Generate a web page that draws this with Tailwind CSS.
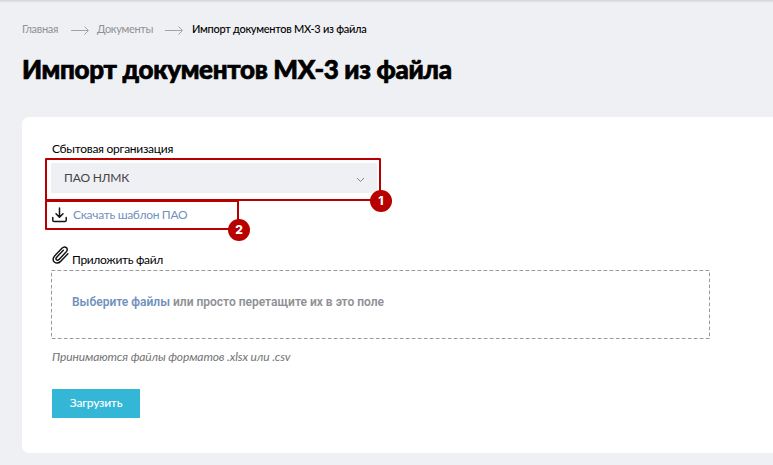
<!DOCTYPE html>
<html lang="ru">
<head>
<meta charset="utf-8">
<title>Импорт документов МХ-3 из файла</title>
<script src="https://cdn.jsdelivr.net/npm/@tailwindcss/browser@4"></script>
</head>
<body class="h-[465px] w-[773px] overflow-hidden bg-[#eff0f4] font-['Lato','Liberation_Sans',sans-serif] text-black">
<div class="h-[3px] bg-linear-to-b from-[#d3d4d8] to-[#eff0f4]"></div>
<nav class="mt-[18px] ml-[22px] flex h-4 items-center text-[11px] leading-4 whitespace-nowrap">
  <a class="w-[49px] text-[#909195]"><span class="tracking-[-0.3px]">Главная</span></a>
  <svg class="mt-[3px] w-[26px] shrink-0" width="26" height="10" viewBox="0 0 26 10" fill="none" stroke="#a3a4a8"><path d="M0 4.5h17M13.5.5l4 4-4 4"/></svg>
  <a class="w-[68px] text-[#909195]"><span class="tracking-[-0.35px]">Документы</span></a>
  <svg class="mt-[3px] w-[27px] shrink-0" width="27" height="10" viewBox="0 0 27 10" fill="none" stroke="#a3a4a8"><path d="M0 4.5h17M13.5.5l4 4-4 4"/></svg>
  <span class="font-medium tracking-[-0.29px]">Импорт документов МХ-3 из файла</span>
</nav>
<h1 class="mt-[15px] ml-[22px] h-[34px] text-[26px] leading-[34px] font-black tracking-[-0.34px] whitespace-nowrap [-webkit-text-stroke:0.7px_#000]">Импорт документов МХ-3 из файла</h1>
<main class="mt-[31px] ml-[22px] h-[336px] rounded-l-[7px] bg-white pt-[23px] pl-[29px]">
  <label class="ml-px block h-[17px] text-[12px] leading-[17px] tracking-[-0.27px]">Сбытовая организация</label>
  <div class="relative mt-[6px] h-[30px] w-[326px]">
    <div class="flex h-full items-center justify-between bg-[#eff0f4] pr-[12px] pl-[13px] text-[12px] tracking-[-0.15px] text-[#444]">
      <span>ПАО НЛМК</span>
      <svg class="mt-[3px]" width="9" height="6" viewBox="0 0 9 6" fill="none" stroke="#858689"><path d="M1 1l3.5 3.5L8 1"/></svg>
    </div>
    <div class="absolute -top-[5px] -left-[6px] h-[43px] w-[336px] rounded-[1px] border-2 border-[#b80000]"></div>
    <div class="absolute top-[27px] left-[319px] z-10 flex size-[22px] items-center justify-center rounded-full bg-[#b80000] font-['Inter'] text-[12px] font-extrabold text-white">1</div>
  </div>
  <div class="relative mt-[12px] flex h-[20px] w-[188px] items-center text-[12px] text-[#7191bd]">
    <svg class="mr-[6px] ml-px shrink-0" width="15" height="16" viewBox="0 0 15 16" fill="none" stroke="#151515" stroke-width="1.5" stroke-linecap="round" stroke-linejoin="round"><path d="M7.5 1v9M4 6.7l3.5 3.5L11 6.7M.8 10.5v2.7q0 1.3 1.3 1.3h10.8q1.3 0 1.3-1.3v-2.7"/></svg>
    <span class="tracking-[-0.3px]">Скачать шаблон ПАО</span>
    <div class="absolute -top-[5px] -left-[6px] h-[30px] w-[194px] rounded-[1px] border-2 border-[#b80000]"></div>
    <div class="absolute top-[14px] left-[177px] flex size-[22px] items-center justify-center rounded-full bg-[#b80000] font-['Inter'] text-[12px] font-extrabold text-white">2</div>
  </div>
  <div class="mt-[21px] flex h-[24px] items-start text-[12px] leading-[17px]">
    <svg class="mr-[3px] ml-px shrink-0" width="17" height="18" viewBox="0 0 17 18" fill="none" stroke="#111" stroke-width="1.45" stroke-linecap="round" stroke-linejoin="round"><path d="M15.9 7.8l-6.9 7.3c-5 4.6-10.6-.4-6.4-5.2l7.3-7.7c3.2-3.1 7.2.4 4.4 3.6l-7.2 7.6c-2.2 1.9-4.2-.2-2.4-2.2l6.6-7"/></svg>
    <span class="mt-[5px] tracking-[-0.33px]">Приложить файл</span>
  </div>
  <div class="grid h-[70px] w-[660px]">
    <svg class="col-start-1 row-start-1" width="660" height="70" fill="none" stroke="#98999c"><path d="M.5 .5H658.5V68.5H.5Z" stroke-dasharray="3.7 2.3"/></svg>
    <p class="col-start-1 row-start-1 self-center pb-[6px] pl-[21px] font-['Roboto'] text-[12px] font-semibold text-[#8e9095]"><a class="text-[#7191bd]">Выберите файлы</a> или просто перетащите их в это поле</p>
  </div>
  <p class="mt-[8px] ml-px h-[17px] text-[12px] leading-[17px] tracking-[-0.12px] text-[#747474] italic">Принимаются файлы форматов .xlsx или .csv</p>
  <button class="mt-[24px] ml-px block h-[29px] w-[88px] bg-[#34b7d7] text-[12px] leading-[27px] font-medium tracking-[-0.27px] text-white"><span class="relative -top-px">Загрузить</span></button>
</main>
</body>
</html>
